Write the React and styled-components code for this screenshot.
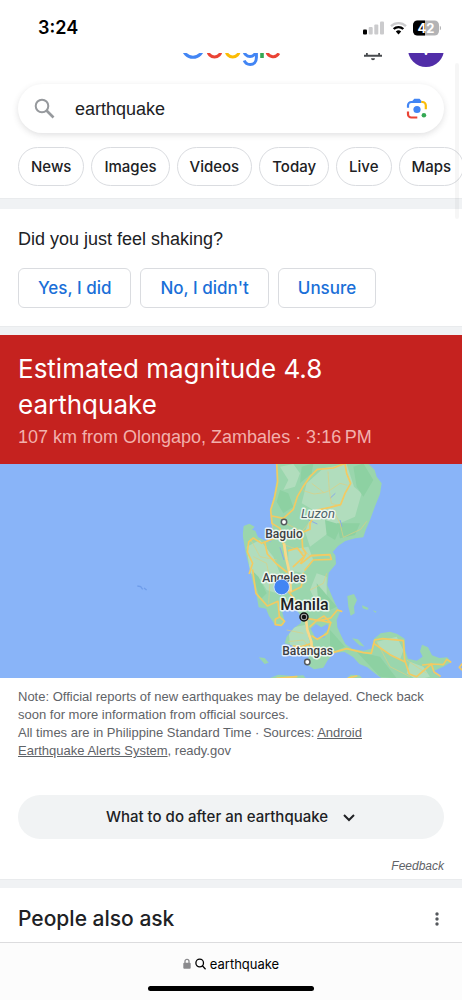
import React from 'react';
import styled, { createGlobalStyle } from 'styled-components';

const GlobalStyle = createGlobalStyle`
  *, *::before, *::after { box-sizing: border-box; }
  html { height: 100%; }
  body {
    margin: 0;
    background: #fff;
    color: #202124;
    font-family: "Liberation Sans", Arial, sans-serif;
    overflow-x: hidden;
  }
  button, input { font: inherit; color: inherit; margin: 0; }
  button { cursor: pointer; }
`;

const display = 'Inter, "Liberation Sans", sans-serif';

const Page = styled.div`
  position: relative;
  display: flex;
  flex-direction: column;
  min-height: 100vh;
`;

const StatusBar = styled.header`
  display: flex;
  align-items: center;
  justify-content: space-between;
  height: 53px;
  padding: 2px 21px 0 38px;
`;

const Clock = styled.time`
  font: 600 18px/24px ${display};
  color: #000;
`;

const StatusIcons = styled.div`
  display: flex;
  align-items: center;
  gap: 6px;
  svg { display: block; }
`;

const Masthead = styled.div`
  display: grid;
  grid-template-columns: 1fr auto 1fr;
  grid-template-rows: 14px;
  align-items: end;
  height: 14px;
  padding: 0 18px;
  overflow: hidden;
  svg { display: block; }
`;

const LogoLink = styled.a`
  grid-column: 2;
  display: block;
`;

const Account = styled.div`
  display: flex;
  justify-content: flex-end;
  align-items: flex-end;
  gap: 26px;
`;

const BellButton = styled.button`
  padding: 0;
  border: 0;
  background: none;
`;

const Avatar = styled.button`
  width: 36px;
  height: 36px;
  padding: 0;
  border: 0;
  border-radius: 50%;
  background: #512da8;
  color: #fff;
  font: 400 17px/36px Roboto, sans-serif;
`;

const SearchBox = styled.form`
  display: flex;
  align-items: center;
  height: 49px;
  margin: 17px 18px 0;
  padding: 0 16px;
  border-radius: 25px;
  background: #fff;
  box-shadow: 0 2px 6px rgba(60, 64, 67, 0.16);
  svg { display: block; flex: none; }
`;

const SearchInput = styled.input`
  flex: 1;
  min-width: 0;
  padding: 0;
  margin-left: 20px;
  border: 0;
  outline: 0;
  background: none;
  font-size: 18px;
  line-height: 24px;
`;

const IconButton = styled.button`
  display: grid;
  place-items: center;
  padding: 0;
  border: 0;
  background: none;
`;

const Chips = styled.nav`
  display: flex;
  gap: 7px;
  padding: 14px 0 12px 18px;
  overflow: hidden;
`;

const Chip = styled.a`
  flex: none;
  height: 39px;
  padding: 0 12px;
  border: 1px solid #dadce0;
  border-radius: 20px;
  font: 500 15px/37px ${display};
  color: #202124;
  text-decoration: none;
`;

const Divider = styled.div`
  flex: none;
  height: ${(p) => (p.$tall ? 11 : 9)}px;
  background: #f0f2f4;
  border-top: 1px solid #e9ebed;
`;

const Survey = styled.section`
  padding: 18px 18px;
`;

const Question = styled.h2`
  margin: 0 0 17px;
  font-size: 18px;
  font-weight: 400;
  line-height: 24px;
`;

const Answers = styled.div`
  display: flex;
  gap: 9px;
`;

const Answer = styled.button`
  height: 40px;
  padding: 0 19px;
  border: 1px solid #dadce0;
  border-radius: 6px;
  background: #fff;
  color: #1a6fd8;
  font: 500 17px/38px ${display};
`;

const Alert = styled.section`
  padding: 16px 18px 15px;
  background: #c5221f;
`;

const AlertTitle = styled.h1`
  margin: 0;
  max-width: 340px;
  color: #fff;
  font: 400 26px/36px ${display};
`;

const AlertMeta = styled.p`
  margin: 0;
  padding-top: 2px;
  color: #f2b0ac;
  font-size: 18px;
  line-height: 24px;
`;

const MapView = styled.svg`
  display: block;
  width: 100%;
  height: 214px;
  background: #89b4f8;
`;

const Notes = styled.section`
  padding: 10px 18px 0;
  color: #5f6368;
  font-size: 13px;
  line-height: 18px;
  p { margin: 0; max-width: 410px; }
`;

const SourceLink = styled.a`
  color: inherit;
`;

const Guide = styled.button`
  display: flex;
  align-items: center;
  justify-content: center;
  gap: 14px;
  height: 44px;
  margin: 35px 18px 0;
  border: 0;
  border-radius: 22px;
  background: #f1f3f4;
  font: 500 15px/24px ${display};
`;

const Feedback = styled.a`
  align-self: flex-end;
  margin: 18px 18px 4px;
  color: #5f6368;
  font-size: 12px;
  font-style: italic;
  line-height: 18px;
  text-decoration: none;
`;

const PeopleAsk = styled.section`
  display: flex;
  flex: 1;
  align-items: center;
  justify-content: space-between;
  min-height: 54px;
  padding: 8px 18px 0;
`;

const AskTitle = styled.h2`
  margin: 0;
  font: 500 21px/32px ${display};
`;

const AddressBar = styled.footer`
  display: flex;
  flex-direction: column;
  align-items: center;
  gap: 12px;
  height: 58px;
  padding-top: 11px;
  border-top: 1px solid #dcdcde;
  background: #fcfcfc;
`;

const Address = styled.div`
  display: flex;
  align-items: center;
  gap: 4px;
  color: #000;
  font: 400 13px/20px ${display};
`;

const HomeIndicator = styled.div`
  width: 36%;
  height: 5px;
  border-radius: 3px;
  background: #000;
`;

const ScrollTrack = styled.div`
  position: absolute;
  top: 63px;
  right: 3px;
  width: 4px;
  height: 156px;
  border-radius: 2px;
  background: rgba(0, 0, 0, 0.035);
`;

function Signal() {
  return (
    <svg width="21" height="14" viewBox="0 0 21 14" aria-label="Signal">
      <rect x="0" y="8.5" width="4" height="5" rx="1" fill="#000" />
      <g fill="#cbcbcd">
        <rect x="5.7" y="6" width="4" height="7.5" rx="1" />
        <rect x="11.3" y="3.5" width="4" height="10" rx="1" />
        <rect x="17" y="0.5" width="4" height="13" rx="1" />
      </g>
    </svg>
  );
}

function Wifi() {
  return (
    <svg width="17" height="14" viewBox="0 0 17 14" fill="none" aria-label="Wi-Fi">
      <path d="M1 5.2a10.8 10.8 0 0 1 15 0" stroke="#cbcbcd" strokeWidth="2.4" />
      <path d="M3.7 8a7 7 0 0 1 9.600 0" stroke="#000" strokeWidth="2.4" />
      <path d="M8.5 13.4 5.8 10.6a4 4 0 0 1 5.400 0Z" fill="#000" />
    </svg>
  );
}

function Battery() {
  return (
    <svg width="28" height="16" viewBox="0 0 28 16" aria-label="Battery 42%">
      <defs>
        <clipPath id="cell"><rect x="0" y="0.5" width="26" height="15" rx="4.5" /></clipPath>
      </defs>
      <g clipPath="url(#cell)">
        <rect width="27" height="16" fill="#b3b3b5" />
        <rect width="12" height="16" fill="#000" />
      </g>
      <path d="M26.800 5.700c.8.400 1.200 1.200 1.200 2.300s-.4 1.900-1.200 2.300Z" fill="#b3b3b5" />
      <text x="13" y="12.500" textAnchor="middle" fontFamily="Inter" fontWeight="700" fontSize="13" fill="#fff">42</text>
    </svg>
  );
}

function Logo() {
  return (
    <svg width="100" height="14" viewBox="0 0 100 14" fill="none" strokeWidth="3" aria-label="Google">
      <circle cx="12" cy="-5.7" r="10" stroke="#4285f4" />
      <circle cx="33.500" cy="-2.500" r="6.500" stroke="#ea4335" />
      <circle cx="51.700" cy="-2.500" r="6.500" stroke="#fbbc05" />
      <circle cx="69" cy="-2.500" r="6" stroke="#4285f4" />
      <path d="M75.400-4V4.500c0 4.600-2.700 7-6.200 7-3 0-5-1.600-6-4" stroke="#4285f4" />
      <path d="M81-3V5" stroke="#34a853" strokeWidth="3.600" />
      <path d="M85.800-2.500a6.400 6.400 0 0 0 12 2.800" stroke="#ea4335" />
    </svg>
  );
}

function Bell() {
  return (
    <svg width="18" height="14" viewBox="0 0 18 14" fill="#474a4d">
      <path d="M2 0h1.800v1.800H2zM14.200 0H16v1.800h-1.800zM0 1.700h18v2H0zM7 5.300h4a2 2 0 0 1-4 0Z" />
    </svg>
  );
}

function Lens() {
  return (
    <svg width="22" height="22" viewBox="0 0 22 22" fill="none" strokeWidth="2.200">
      <path d="M2 9.800V7.300a3.300 3.300 0 0 1 3.300-3.300h10" stroke="#4285f4" />
      <path d="M5.800 3.600 8.300 0.800h5.200L16 3.600Z" fill="#4285f4" />
      <path d="M15.300 4h1.200a3.300 3.300 0 0 1 3.300 3.300v4" stroke="#fbbc05" />
      <path d="M2 13.500v2.700a3.300 3.300 0 0 0 3.300 3.300h6" stroke="#ea4335" />
      <circle cx="11" cy="11.500" r="3.600" fill="#4285f4" />
      <circle cx="17.900" cy="17.300" r="2.300" fill="#34a853" />
    </svg>
  );
}

const label = {
  fontFamily: 'Roboto, sans-serif',
  fontWeight: 500,
  fontSize: 13,
  textAnchor: 'middle',
  fill: '#3c4043',
  stroke: '#fff',
  strokeOpacity: 0.8,
  strokeWidth: 3,
  strokeLinejoin: 'round',
  paintOrder: 'stroke',
};

function LuzonMap() {
  return (
    <MapView viewBox="0 0 462 214" preserveAspectRatio="xMidYMid slice" role="img" aria-label="Map of Luzon">
      <defs>
        <clipPath id="land">
          <path d="M139 0 140 60 131 110 120 150 124 190 134 225 122 246 101 240 84 231 76 212 66 209 74 200 58 191 41 198 38 225 44 262 50 290 60 330 70 372 80 408 86 442 108 446 117 468 131 488 134 494 160 496 164 482 157 458 166 434 182 432 202 452 216 474 212 490 192 504 170 530 164 550 192 558 206 580 236 588 232 614 252 628 280 623 292 602 312 578 344 576 370 592 388 612 412 622 440 644 462 660 640 660 616 642 606 636 626 626 640 620 664 606 652 592 628 594 606 586 594 562 576 554 570 574 578 590 560 602 534 596 526 572 524 536 502 522 480 515 452 520 432 536 424 566 400 572 366 566 346 552 334 528 322 502 320 480 330 456 318 436 304 404 292 376 296 338 318 312 316 286 308 276 324 258 346 243 376 235 400 232 408 208 420 180 434 142 450 102 455 70 440 50 434 30 414 10 414 0Z" />
        </clipPath>
      </defs>
      <g transform="translate(230 -4) scale(0.33333)">
        <g clipPath="url(#land)">
          <rect x="0" y="0" width="700" height="660" fill="#9ad6ad" />
          <g fill="#b1ddbd">
            <path d="M230 70 280 25 350 12 372 80 395 100 375 170 330 190 300 215 240 260 225 215 250 150 215 130Z" />
            <path d="M150 20 190 12 210 40 195 80 160 90 175 60Z" />
            <path d="M50 260 90 240 130 290 150 340 140 400 110 390 85 350 60 340Z" />
            <path d="M175 270 235 260 250 300 220 340 175 330Z" />
            <path d="M175 505 225 495 240 550 220 575 180 555Z" />
            <path d="M440 545 500 530 520 570 510 600 450 565Z" />
            <path d="M540 605 580 620 600 650 560 660 530 640Z" />
            <path d="M260 340 290 350 290 420 260 430 240 390Z" />
          </g>
          <g fill="#8dd1a2">
            <path d="M370 20 400 10 430 60 400 110 380 80Z" />
            <path d="M150 90 175 100 190 140 160 160 140 125Z" />
            <path d="M215 20 250 10 245 40 210 70Z" />
            <path d="M320 190 390 190 375 225 330 235Z" />
            <path d="M285 180 335 195 315 240 290 225Z" />
            <path d="M65 330 85 350 110 400 90 420Z" />
            <path d="M260 370 320 440 300 450 265 430Z" />
            <path d="M300 510 345 560 300 580Z" />
            <path d="M380 575 450 590 500 655 450 650Z" />
          </g>
          <path d="M150 262 162 300 M236 180 262 192 M330 180 336 200 M300 115 316 100" stroke="#89a9e8" strokeWidth="3" />
        </g>
        <path d="M242 506 258 492 274 502 292 492 298 506 282 520 286 532 258 536Z" fill="#89b4f8" />
        <g fill="#9ad6ad">
          <path d="M352 408 372 402 381 420 372 440 374 460 362 467 355 440Z" />
          <path d="M396 436 416 444 412 450 398 445Z M428 450 440 455 436 458Z" />
          <path d="M366 535 384 538 404 560 388 556Z" />
          <path d="M86 592 104 594 116 608 104 612Z" />
          <path d="M120 654 145 644 185 648 220 646 232 660 120 660Z" />
          <path d="M345 660 362 644 388 646 402 660Z" />
        </g>
        <path d="M-278 378 -268 380 -262 388M-258 384 -250 390" fill="none" stroke="#6f9dea" strokeWidth="4" />
        <g fill="none" stroke="#e0cf7e" strokeWidth="2" strokeLinejoin="round">
          <path d="M245 70 282 98 298 92 294 34M298 92 330 70 352 76M282 98 252 102 220 92M298 92 304 130 332 138" />
          <path d="M310 150 330 190 340 232 392 208 410 184M162 187 215 215 245 180M60 235 90 290 140 300M110 245 130 220 124 170" />
          <path d="M165 255 200 268 228 282 M70 290 110 310 120 360 116 430M220 265 240 290 300 285M240 390 280 370 290 340" />
          <path d="M175 545 220 540 250 575M170 510 220 520M440 545 480 620 540 650M530 600 590 640" />
        </g>
        <g fill="none" stroke="#f3ca62" strokeWidth="5" strokeLinejoin="round" strokeLinecap="round">
          <path d="M140 10 143 65 133 115 122 150 126 190 150 205 162 260 166 290" />
          <path d="M126 168 160 175 190 148 202 110 218 82 240 50 262 28 310 24 340 12" />
          <path d="M345 12 350 40 362 70 345 100 332 134 300 142 262 150 240 190 240 208 215 218 218 265 228 280 212 310" />
          <path d="M58 340 68 310 52 276 56 246 70 234 95 250 130 236 152 224M105 250 112 282 140 312 170 336" />
          <path d="M176 272 202 264 222 290 190 320M214 310 244 286 300 284 304 298 250 300 225 330" />
          <path d="M68 330 78 400 112 438 144 424 148 470 164 484 154 496 136 494 136 478 150 470" />
          <path d="M220 340 214 380 178 398 220 450M178 398 164 380" />
          <path d="M230 475 268 482 302 474 322 450 335 454M240 500 262 480 302 488 292 520 262 538 246 528" />
          <path d="M262 480 282 468 302 488M246 550 215 560 190 558M248 560 300 580 350 566 400 578 424 580 434 540 458 536 520 542 524 600 538 642 560 650 604 612 640 614 650 598 662 606" />
          <path d="M434 552 480 584 524 605M578 615 604 612 612 636 630 648M355 654 380 648M140 655 200 650M696 612 688 622 696 630" />
        </g>
        <g fill="none" stroke="#f8d98a" strokeWidth="8" strokeLinejoin="round">
          <path d="M162 250 170 300 180 345 182 395" />
          <path d="M228 478 232 510 244 545 246 575" />
        </g>
      </g>
      <circle cx="284" cy="58" r="2.700" fill="#fff" stroke="#55595d" strokeWidth="1.500" />
      <circle cx="307.300" cy="198" r="2.700" fill="#fff" stroke="#55595d" strokeWidth="1.500" />
      <text {...label} x="318" y="54" fontStyle="italic" fontWeight="400" fill="#4f6268">Luzon</text>
      <text {...label} x="284" y="74" fontSize="12">Baguio</text>
      <text {...label} x="284" y="118" fontSize="12">Angeles</text>
      <circle cx="281.700" cy="123" r="7.800" fill="#4285f4" stroke="#cfe0fc" strokeWidth="1" />
      <text {...label} x="304.500" y="146" fontSize="16" fill="#202124">Manila</text>
      <text {...label} x="307.500" y="191" fontSize="12">Batangas</text>
      <circle cx="304" cy="153" r="4" fill="#a8a8a8" stroke="#111" strokeWidth="1.500" />
      <circle cx="304" cy="153" r="2.200" fill="#111" />
    </MapView>
  );
}

export default function App() {
  return (
    <>
      <GlobalStyle />
      <Page>
        <StatusBar>
          <Clock>3:24</Clock>
          <StatusIcons>
            <Signal />
            <Wifi />
            <Battery />
          </StatusIcons>
        </StatusBar>

        <Masthead>
          <LogoLink href="#home"><Logo /></LogoLink>
          <Account>
            <BellButton type="button" aria-label="Notifications"><Bell /></BellButton>
            <Avatar type="button" aria-label="Account">V</Avatar>
          </Account>
        </Masthead>

        <SearchBox role="search" onSubmit={(e) => e.preventDefault()}>
          <svg width="21" height="21" viewBox="0 0 21 21" fill="none" stroke="#96999d" strokeWidth="2">
            <circle cx="8" cy="8" r="6.300" />
            <path d="m12.500 12.500 7 7" strokeWidth="2.600" />
          </svg>
          <SearchInput aria-label="Search" type="text" defaultValue="earthquake" />
          <IconButton type="button" aria-label="Search by image"><Lens /></IconButton>
        </SearchBox>

        <Chips aria-label="Search filters">
          {['News', 'Images', 'Videos', 'Today', 'Live', 'Maps'].map((name) => (
            <Chip key={name} href={`#${name.toLowerCase()}`}>{name}</Chip>
          ))}
        </Chips>

        <Divider $tall />

        <Survey>
          <Question>Did you just feel shaking?</Question>
          <Answers>
            <Answer type="button">Yes, I did</Answer>
            <Answer type="button">No, I didn't</Answer>
            <Answer type="button">Unsure</Answer>
          </Answers>
        </Survey>

        <Divider />

        <Alert>
          <AlertTitle>Estimated magnitude 4.8 earthquake</AlertTitle>
          <AlertMeta>107 km from Olongapo, Zambales · 3:16&#8201;PM</AlertMeta>
        </Alert>
        <LuzonMap />

        <Notes>
          <p>Note: Official reports of new earthquakes may be delayed. Check back soon for more information from official sources.</p>
          <p>
            All times are in Philippine Standard Time · Sources:{' '}
            <SourceLink href="#alerts">Android Earthquake Alerts System</SourceLink>, ready.gov
          </p>
        </Notes>

        <Guide type="button">
          What to do after an earthquake
          <svg width="14" height="9" viewBox="0 0 14 9" fill="none" stroke="#202124" strokeWidth="2">
            <path d="m2 2 5 5 5-5" />
          </svg>
        </Guide>

        <Feedback href="#feedback">Feedback</Feedback>

        <Divider />

        <PeopleAsk>
          <AskTitle>People also ask</AskTitle>
          <IconButton type="button" aria-label="More options">
            <svg width="14" height="16" viewBox="0 0 14 16" fill="#55585c">
              <circle cx="7" cy="3" r="1.700" />
              <circle cx="7" cy="8" r="1.700" />
              <circle cx="7" cy="13" r="1.700" />
            </svg>
          </IconButton>
        </PeopleAsk>

        <AddressBar>
          <Address>
            <svg width="8" height="12" viewBox="0 0 8 12">
              <path d="M2 5V3.300a2 2 0 0 1 4 0V5" fill="none" stroke="#8a8a8d" strokeWidth="1.300" />
              <rect x="0.300" y="4.800" width="7.400" height="6" rx="1" fill="#8a8a8d" />
            </svg>
            <svg width="11" height="12" viewBox="0 0 11 12" fill="none" stroke="#000" strokeWidth="1.300">
              <circle cx="4.700" cy="5" r="3.800" />
              <path d="m7.400 7.800 3.200 3.400" />
            </svg>
            <span>earthquake</span>
          </Address>
          <HomeIndicator />
        </AddressBar>
        <ScrollTrack />
      </Page>
    </>
  );
}
